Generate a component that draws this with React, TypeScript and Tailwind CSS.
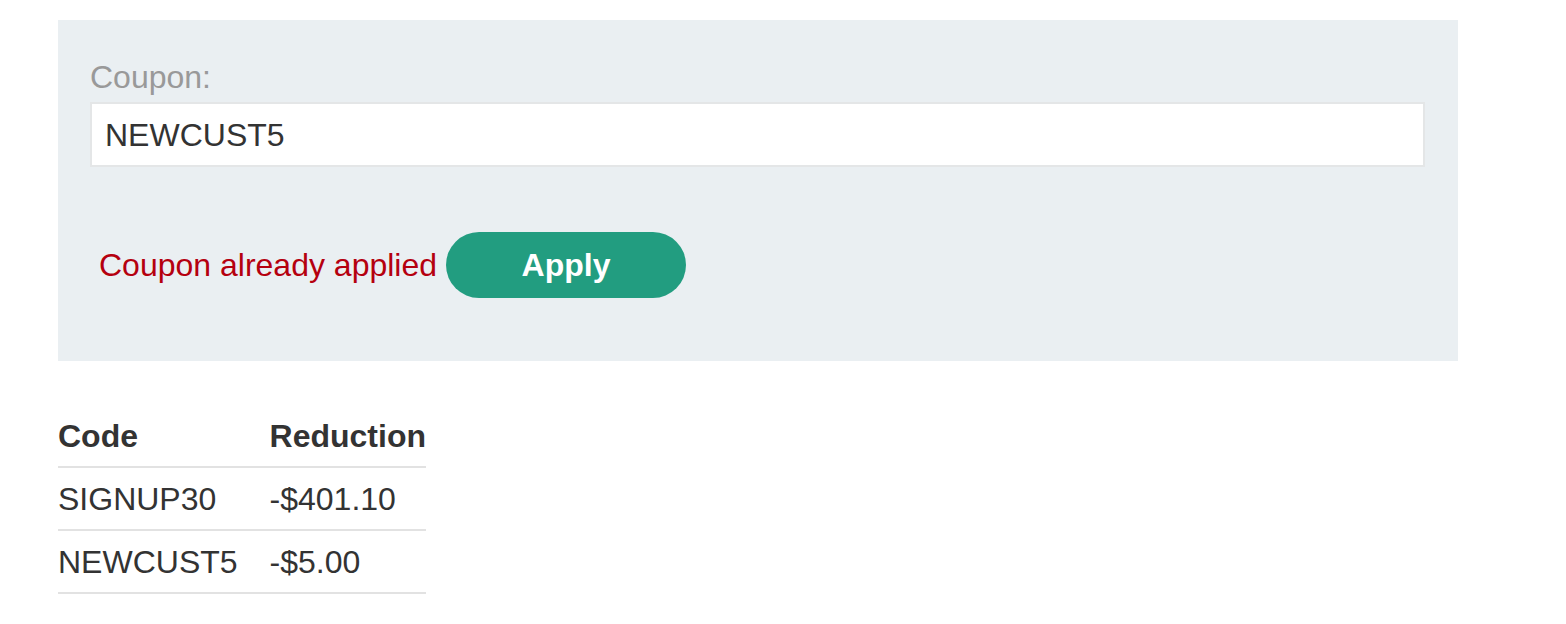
export default function App() {
  const rows = [
    { code: "SIGNUP30", reduction: "-$401.10" },
    { code: "NEWCUST5", reduction: "-$5.00" },
  ];

  return (
    <div className="min-h-screen bg-white pt-[20px] pl-[58px] font-['Liberation_Sans',Arial,sans-serif] text-[32px] text-[#333]">
      {/* Coupon panel */}
      <div className="w-[1400px] bg-[#eaeff2] pt-[37px] pb-[63px] px-[32px]">
        <label className="block leading-[40px] text-[#999] mb-[5px]">Coupon:</label>
        <div className="h-[65px] flex items-center bg-white border-2 border-[#e4e6e7] px-[13px] mr-px">
          NEWCUST5
        </div>
        <div className="mt-[65px] flex items-center">
          <span className="ml-[9px] text-[#b5000f]">Coupon already applied</span>
          <button className="ml-[9px] w-[240px] h-[66px] rounded-full bg-[#229d80] text-white font-bold">
            Apply
          </button>
        </div>
      </div>

      {/* Applied coupons */}
      <table className="mt-[45px] border-collapse">
        <thead>
          <tr className="border-b-2 border-[#e2e2e2]">
            <th className="h-[61px] pr-[32px] text-left font-bold align-middle">Code</th>
            <th className="h-[61px] text-left font-bold align-middle">Reduction</th>
          </tr>
        </thead>
        <tbody>
          {rows.map((r) => (
            <tr key={r.code} className="border-b-2 border-[#e2e2e2]">
              <td className="h-[63px] pr-[32px] align-middle">{r.code}</td>
              <td className="h-[63px] align-middle">{r.reduction}</td>
            </tr>
          ))}
        </tbody>
      </table>
    </div>
  );
}
